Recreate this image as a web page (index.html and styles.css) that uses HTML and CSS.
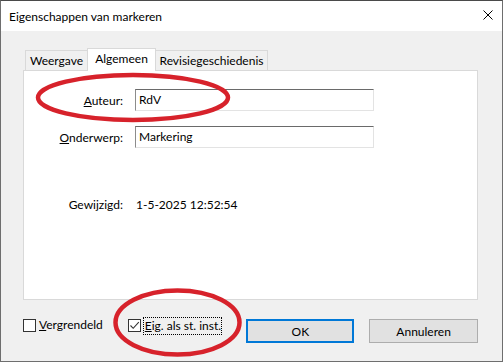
FILE: index.html
```html
<!DOCTYPE html>
<html lang="nl">
<head>
<meta charset="utf-8">
<title>Eigenschappen van markeren</title>
<link rel="stylesheet" href="styles.css">
</head>
<body>
<div class="window">
  <div class="titlebar">
    <span class="title">Eigenschappen van markeren</span>
    <svg class="close" width="10" height="10" viewBox="0 0 10 10"><path d="M0.5 0.5 L9.5 9.5 M9.5 0.5 L0.5 9.5" stroke="#000" stroke-width="1" fill="none"/></svg>
  </div>
  <div class="content">
    <div class="tabs">
      <div class="tab tab-weergave">Weergave</div>
      <div class="tab tab-active tab-algemeen">Algemeen</div>
      <div class="tab tab-revisie">Revisiegeschiedenis</div>
    </div>
    <div class="panel">
      <div class="field">
        <span class="lbl"><u>A</u>uteur:</span>
        <div class="input">RdV</div>
      </div>
      <div class="field field-second">
        <span class="lbl"><u>O</u>nderwerp:</span>
        <div class="input">Markering</div>
      </div>
      <div class="info">
        <span class="lbl">Gewijzigd:</span>
        <span class="val">1-5-2025 12:52:54</span>
      </div>
    </div>
    <div class="footer">
      <div class="check check-lock">
        <span class="box"></span>
        <span class="check-text"><u>V</u>ergrendeld</span>
      </div>
      <div class="check check-default">
        <span class="box"><svg width="11" height="11" viewBox="0 0 11 11"><path d="M1.5 5.5 L4.2 8.3 L9.8 2.2" stroke="#333" stroke-width="1.1" fill="none"/></svg></span>
        <span class="check-text focus"><u>E</u>ig. als st. inst.</span>
      </div>
      <button class="btn btn-default">OK</button>
      <button class="btn btn-cancel">Annuleren</button>
    </div>
  </div>
  <svg class="marks" width="503" height="363" viewBox="0 0 503 363">
    <ellipse cx="133" cy="97.5" rx="95" ry="22.5" fill="none" stroke="#d7222b" stroke-width="4.5"/>
    <ellipse cx="177.5" cy="322.5" rx="62" ry="32" fill="none" stroke="#d7222b" stroke-width="4.5"/>
  </svg>
</div>
</body>
</html>
```
FILE: styles.css
```css
* { box-sizing: border-box; }
html, body {
  margin: 0;
  padding: 0;
  background: #ffffff;
}
body {
  font-family: Lato, "Noto Sans", "Liberation Sans", sans-serif;
  font-size: 12px;
  color: #000;
}
.window {
  position: relative;
  width: 503px;
  height: 362px;
  border: 1px solid #6e6e6e;
  border-top-color: #4a4a4a;
  display: flex;
  flex-direction: column;
  background: #f0f0f0;
}
.titlebar {
  height: 30px;
  background: #ffffff;
  display: flex;
  align-items: center;
  justify-content: space-between;
  padding: 0 9px 0 8px;
}
.title {
  font-size: 12px;
  line-height: 16px;
  margin-top: 1px;
}
.close {
  display: block;
  margin-top: -3px;
}
.content {
  flex: 1;
  display: flex;
  flex-direction: column;
  padding: 17px 24px 0 22px;
}
.tabs {
  display: flex;
  align-items: flex-end;
  height: 22px;
  margin-left: 2px;
  position: relative;
  z-index: 2;
}
.tab {
  height: 20px;
  border: 1px solid #d9d9d9;
  border-bottom: none;
  background: #f0f0f0;
  text-align: center;
  line-height: 18px;
  padding-top: 1px;
}
.tab-weergave { width: 62px; border-right: none; }
.tab-algemeen { width: 69px; }
.tab-revisie { width: 112px; border-left: none; }
.tab-active {
  height: 23px;
  margin-bottom: -1px;
  background: #ffffff;
  padding-top: 1px;
}
.panel {
  height: 230px;
  border: 1px solid #d9d9d9;
  background: #ffffff;
  padding-top: 18px;
  position: relative;
  z-index: 1;
}
.field {
  display: flex;
  align-items: center;
  height: 22px;
}
.field-second { margin-top: 15px; }
.lbl {
  width: 99px;
  text-align: right;
  margin-right: 12px;
}
.input {
  width: 239px;
  height: 22px;
  border: 1px solid;
  border-color: #6a6a6a #e3e3e3 #e3e3e3 #8c8c8c;
  padding: 0 3px;
  line-height: 19px;
  background: #fff;
}
.info {
  display: flex;
  margin-top: 49px;
  line-height: 16px;
}
.info .lbl { margin-right: 13px; }
.footer {
  display: flex;
  align-items: flex-start;
  margin-top: 17px;
}
.check {
  display: flex;
  align-items: flex-start;
  height: 18px;
}
.check-lock { width: 105px; }
.check-default { width: 119px; }
.box {
  width: 13px;
  height: 13px;
  margin-top: 2px;
  border: 1px solid #333;
  background: #fff;
  display: flex;
  align-items: center;
  justify-content: center;
}
.check-text {
  line-height: 16px;
  margin-left: 3px;
  padding-top: 0px;
}
.focus {
  margin-left: 2px;
  border: 1px dotted #000;
  padding: 0 0 0 1px;
  height: 18px;
}
.btn {
  font-family: inherit;
  font-size: 12px;
  color: #000;
  margin: 2px 0 0 0;
  width: 108px;
  height: 24px;
  background: #e1e1e1;
  border: 1px solid #adadad;
  padding: 0;
  padding-top: 1px;
}
.btn-default {
  border: 2px solid #0078d7;
}
.btn-cancel {
  width: 109px;
  margin-left: 15px;
}
.marks {
  position: absolute;
  left: -1px;
  top: -1px;
  pointer-events: none;
  z-index: 5;
}
```
